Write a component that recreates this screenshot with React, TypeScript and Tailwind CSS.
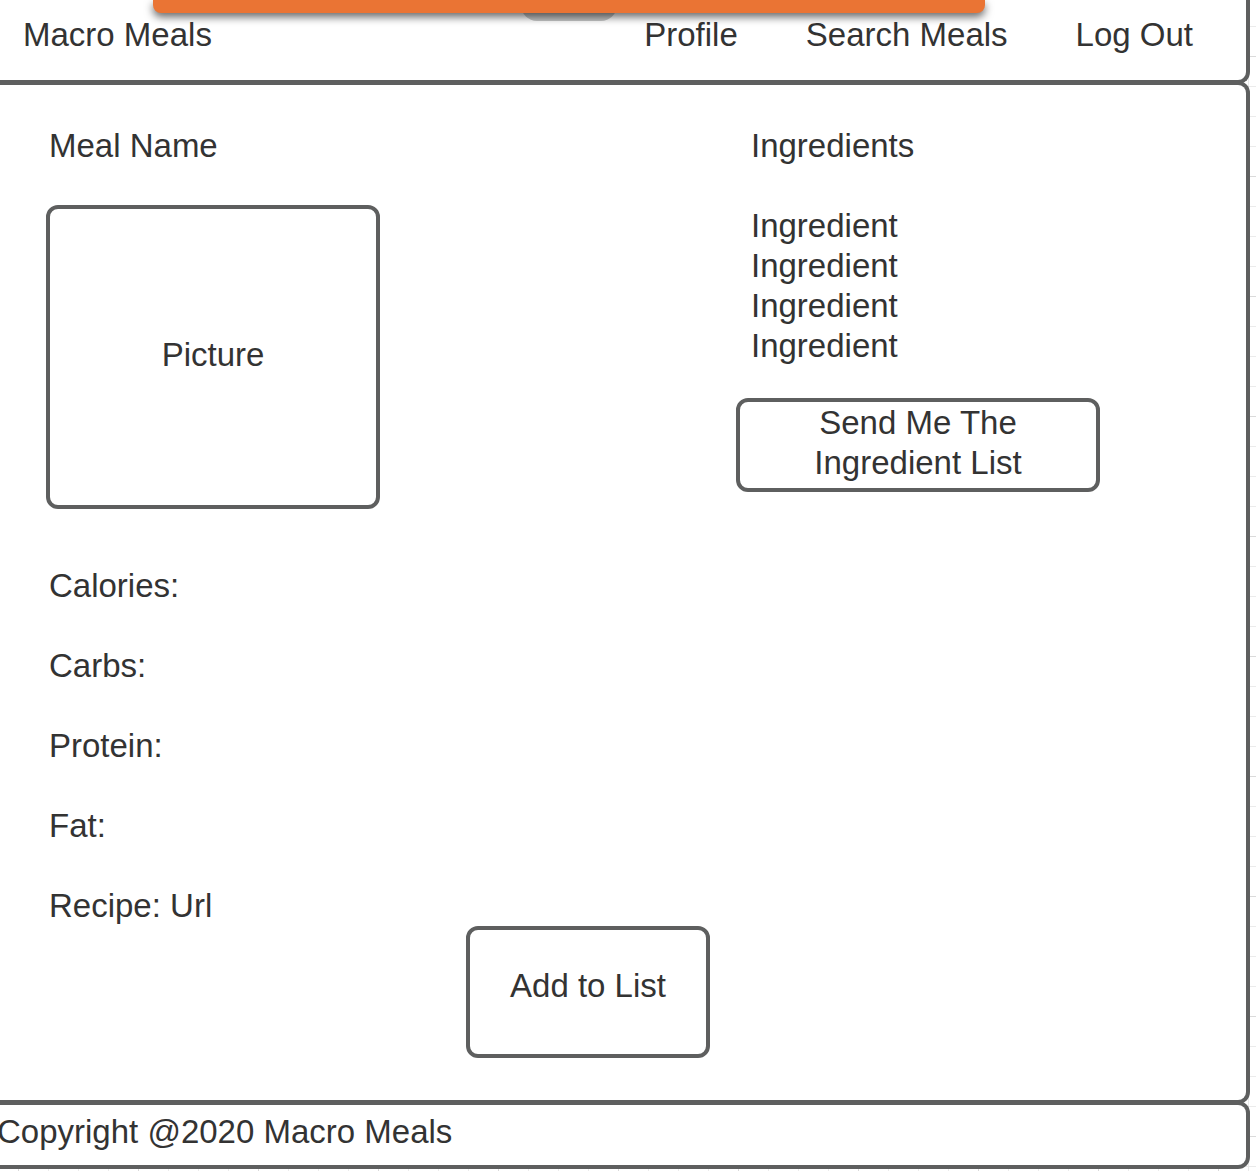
const ingredients = ["Ingredient", "Ingredient", "Ingredient", "Ingredient"];
const facts = ["Calories:", "Carbs:", "Protein:", "Fat:"];
const links = ["Profile", "Search Meals", "Log Out"];

// Canvas grid: faint lines every 30px, a stronger one every 120px.
const gridLines =
  "bg-white bg-[linear-gradient(to_right,#dadada_1px,transparent_1px),linear-gradient(to_bottom,#dadada_1px,transparent_1px),linear-gradient(to_right,#ebebeb_1px,transparent_1px),linear-gradient(to_bottom,#ebebeb_1px,transparent_1px)] bg-[size:120px_120px,120px_120px,30px_30px,30px_30px] bg-[position:18px_0,0_56px,18px_0,0_26px]";

const panel = "border-4 border-l-0 border-[#5e5f5f] bg-white";
const box = "flex items-center justify-center text-center border-4 border-[#5e5f5f] rounded-xl bg-white";

function TopNotice() {
  return (
    <div className="absolute top-0 left-[153px] right-[271px] flex justify-center" aria-hidden="true">
      <div className="h-[21px] w-24 rounded-b-2xl bg-[#c6c7c7]" />
      <div className="absolute inset-x-0 top-0 h-[13px] rounded-b-lg bg-[#ea7434] shadow-[0_4px_8px_rgba(0,0,0,0.6)]" />
    </div>
  );
}

export default function App() {
  return (
    <div
      className={`relative min-h-screen overflow-hidden pr-1.5 pb-0.5 font-['Liberation_Sans',Arial,sans-serif] text-[33px] leading-10 text-[#333] ${gridLines}`}
    >
      <header className={`${panel} rounded-br-xl border-t-0 flex items-center justify-between pt-[15px] pb-[25px] pl-[23px] pr-[53px]`}>
        <a href="#home">Macro Meals</a>
        <nav className="flex gap-17">
          {links.map((label) => (
            <a key={label} href="#">
              {label}
            </a>
          ))}
        </nav>
      </header>
      <TopNotice />

      <main className={`${panel} rounded-r-xl -mt-[3px] pt-[41px] pb-[42px]`}>
        <div className="flex justify-between pl-[46px] pr-[146px]">
          <section>
            <h1 className="pl-[3px]">Meal Name</h1>
            <div className={`${box} mt-[39px] h-[304px] w-[334px] pb-1`}>Picture</div>
            <div className="mt-[57px] flex flex-col gap-10 pl-[3px]">
              {facts.map((fact) => (
                <p key={fact}>{fact}</p>
              ))}
              <p>
                Recipe: <a href="#recipe">Url</a>
              </p>
            </div>
          </section>

          <section className="w-[364px]">
            <h2 className="pl-[15px]">Ingredients</h2>
            <ul className="mt-10 pl-[15px]">
              {ingredients.map((name, i) => (
                <li key={i}>{name}</li>
              ))}
            </ul>
            <button type="button" className={`${box} mt-8 w-full pt-px pb-[5px]`}>
              Send Me The
              <br />
              Ingredient List
            </button>
          </section>
        </div>

        <div className="flex justify-center pr-[70px]">
          <button type="button" className={`${box} h-[132px] w-[244px] pb-3`}>
            Add to List
          </button>
        </div>
      </main>

      <footer className={`${panel} rounded-r-xl -mt-[3px] pt-[7px] pb-[13px]`}>
        <p className="-ml-[3px]">Copyright @2020 Macro Meals</p>
      </footer>
    </div>
  );
}
